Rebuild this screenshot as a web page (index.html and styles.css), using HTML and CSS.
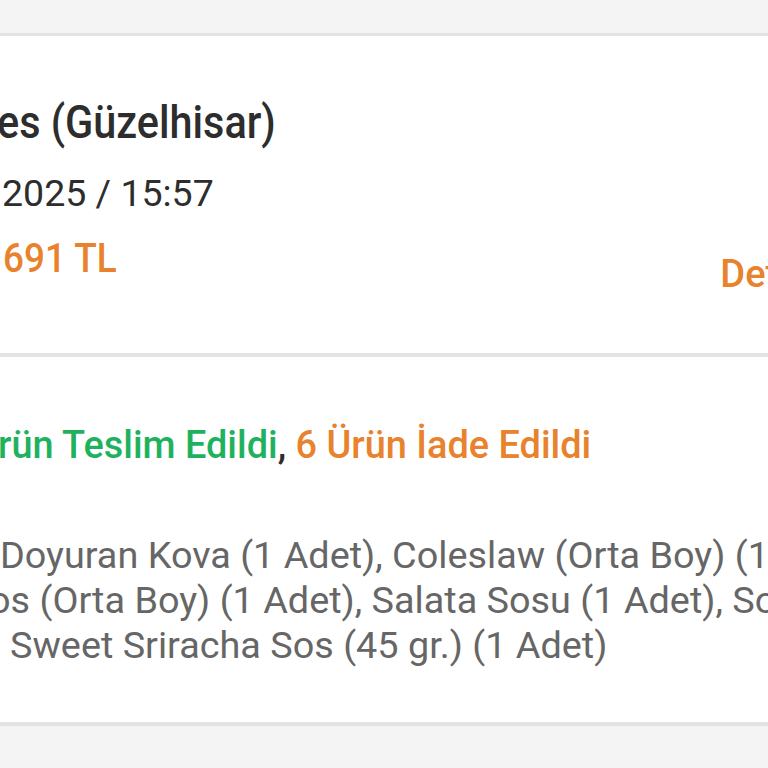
FILE: index.html
```html
<!DOCTYPE html>
<html lang="tr">
<head>
<meta charset="utf-8">
<link rel="stylesheet" href="styles.css">
</head>
<body>
<div class="page">
  <div class="top-space"></div>
  <section class="card">
    <div class="info">
      <div class="title"><span class="squeeze">es (Güzelhisar)</span></div>
      <div class="date">2025 / 15:57</div>
      <div class="price-row">
        <div class="price"><span class="squeeze">691 TL</span></div>
        <div class="detail">Detay</div>
      </div>
    </div>
    <div class="divider"></div>
    <div class="items">
      <div class="status"><span class="ok">rün Teslim Edildi</span>, <span class="ret">6 Ürün İade Edildi</span></div>
      <div class="list">
        <div class="line l1">Doyuran Kova (1 Adet), Coleslaw (Orta Boy) (1 Adet), Patates</div>
        <div class="line l2">os (Orta Boy) (1 Adet), Salata Sosu (1 Adet), Sos (1 Adet)</div>
        <div class="line l3">Sweet Sriracha Sos (45 gr.) (1 Adet)</div>
      </div>
    </div>
  </section>
  <div class="bottom-space"></div>
</div>
</body>
</html>
```
FILE: styles.css
```css
html, body {
  margin: 0;
  padding: 0;
  overflow: hidden;
  background: #f4f4f4;
  font-family: Roboto, "Liberation Sans", sans-serif;
}
.page {
  width: 768px;
  height: 768px;
  overflow: hidden;
  display: flex;
  flex-direction: column;
}
.top-space {
  height: 33px;
  flex: none;
}
.card {
  flex: none;
  background: #fff;
  border-top: 3px solid #e3e3e3;
  border-bottom: 4px solid #e3e3e3;
}
.info {
  padding: 56px 0 49px 0;
  white-space: nowrap;
}
.squeeze {
  display: inline-block;
  transform-origin: left center;
}
.title {
  font-size: 46px;
  line-height: 60px;
  color: #2d2d2d;
  font-weight: 500;
  margin-left: -3px;
}
.title .squeeze {
  transform: scaleX(0.9);
}
.date {
  font-size: 37.5px;
  line-height: 60px;
  color: #2d2d2d;
  margin-top: 11px;
  padding-left: 2px;
}
.price-row {
  display: flex;
  justify-content: space-between;
  align-items: flex-start;
  margin-top: 5px;
}
.price {
  font-size: 41px;
  line-height: 60px;
  font-weight: 500;
  color: #e8822c;
  padding-left: 3px;
}
.price .squeeze {
  transform: scaleX(0.9);
}
.detail {
  font-size: 38px;
  line-height: 60px;
  font-weight: 500;
  color: #e8822c;
  margin-top: 16px;
  margin-right: -49px;
}
.divider {
  height: 4px;
  background: #e3e3e3;
}
.items {
  padding: 63px 0 54px 0;
  white-space: nowrap;
}
.status {
  font-size: 37.9px;
  line-height: 50px;
  font-weight: 500;
  color: #2d2d2d;
  text-indent: -2px;
}
.ok { color: #1fb25e; }
.ret { color: #e8822c; }
.list {
  margin-top: 63px;
  color: #666;
  font-size: 37.8px;
  line-height: 45px;
}
.l2 { text-indent: -11px; }
.l3 { padding-left: 10px; }
.bottom-space {
  flex: 1;
}
```
